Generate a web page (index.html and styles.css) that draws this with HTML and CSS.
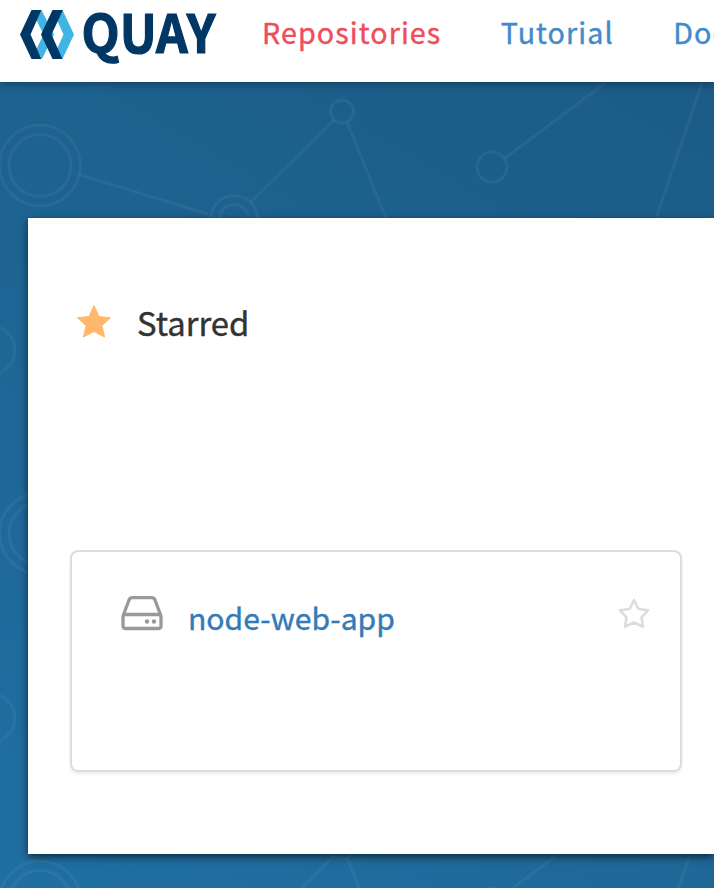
FILE: index.html
```html
<!DOCTYPE html>
<html lang="en">
<head>
<meta charset="utf-8">
<title>Quay</title>
<link rel="stylesheet" href="styles.css">
</head>
<body>
<svg class="network" viewBox="0 0 714 888" aria-hidden="true">
  <defs>
    <g id="tile">
      <circle cx="40" cy="165.500" r="40.500"/><circle cx="40" cy="165.500" r="31"/>
      <path d="M79 174.500L208 214M250 203L334 120M347 122L386 218M505 158L605 83M702 83L656 218"/>
      <circle cx="234" cy="219" r="23.500"/><circle cx="234" cy="219" r="14.500"/>
      <circle cx="342" cy="111.500" r="11.500"/><circle cx="492" cy="167" r="15"/>
    </g>
  </defs>
  <use href="#tile"/>
  <use href="#tile" y="736"/>
  <circle cx="-9" cy="350" r="24"/><circle cx="-9" cy="718" r="24"/>
  <circle cx="40" cy="533.500" r="40.500"/><circle cx="40" cy="533.500" r="31"/>
</svg>
<header class="navbar">
  <a class="brand">
    <svg class="logo" viewBox="0 0 200 60">
      <path class="light" d="M21.500 0L34 24.500L22 49L16.500 39L23.500 24.500L16.500 10Z"/>
      <path class="light" d="M42.500 0L54 24.500L42.500 49L37 39L43.500 24.500L37 10Z"/>
      <path class="dark" d="M11.500 0H21.500L10.500 24.500L21.500 49H11.500L0 24.500Z"/>
      <path class="dark" d="M32.500 0H43L31.500 24.500L42.500 49H32.500L21 24.500Z"/>
      <text class="wordmark" x="61.500" y="43" textLength="134" lengthAdjust="spacingAndGlyphs">QUAY</text>
    </svg>
  </a>
  <nav class="links">
    <a class="link active">Repositories</a>
    <a class="link">Tutorial</a>
    <a class="link">Docs</a>
  </nav>
</header>
<main class="panel">
  <h2 class="heading">
    <svg class="star" viewBox="0 0 34 33"><path d="M17 .5L22 11.500L33.500 12.800L25 20.500L27.500 32L17 26.500L6.500 32L9 20.500L.5 12.800L12 11.500Z"/></svg>
    <span>Starred</span>
  </h2>
  <section class="repo">
    <svg class="drive" viewBox="0 0 42 36">
      <path d="M2 20L8 4Q9 1.700 11.500 1.700H30.500Q33 1.700 34 4L40 20M4.500 18.500H37.500Q40 18.500 40 21V30Q40 32.500 37 32.500H5Q2 32.500 2 30V21Q2 18.500 4.500 18.500Z"/>
      <circle cx="26" cy="25.500" r="2.200"/><circle cx="33" cy="25.500" r="2.200"/>
    </svg>
    <a class="name">node-web-app</a>
    <svg class="star-outline" viewBox="0 0 32 31"><path d="M16 2L20.500 11L30 12.200L23.500 19.300L25 28.700L16 24.500L7 28.700L8.500 19.300L2 12.200L11.500 11Z"/></svg>
  </section>
</main>
</body>
</html>
```
FILE: styles.css
```css
* { box-sizing: border-box; }
html { overflow: hidden; }
body {
  margin: 0;
  height: 888px;
  overflow: hidden;
  position: relative;
  background: linear-gradient(30deg, #206fa2 0%, #1d6290 60%, #1b5a85 100%);
  font-family: "Noto Sans CJK SC", "Noto Sans", sans-serif;
}
.network {
  position: absolute;
  inset: 0;
  width: 714px;
  height: 888px;
  fill: none;
  stroke: rgba(255, 255, 255, 0.05);
  stroke-width: 3;
}
.navbar {
  position: relative;
  display: flex;
  height: 82px;
  padding-left: 20px;
  background: #fff;
  box-shadow: 0 2px 8px rgba(0, 0, 0, 0.35);
}
.brand { flex: none; width: 242px; padding-top: 10px; }
.logo { display: block; width: 200px; height: 60px; }
.dark, .wordmark { fill: #003764; }
.light { fill: #40b4e5; }
.wordmark {
  font-size: 53px;
  font-weight: 700;
  stroke: #003764;
  stroke-width: 1.2;
}
.links { display: flex; flex: 1; gap: 59.5px; min-width: 0; overflow: hidden; }
.link {
  flex: none;
  height: 63px;
  line-height: 63px;
  font-size: 28.7px;
  letter-spacing: 1.08px;
  color: #428bca;
  -webkit-text-stroke: 0.4px currentColor;
}
.link.active { color: #f04c5c; }
.panel {
  position: relative;
  height: 636px;
  margin: 136px 0 0 28px;
  padding: 78px 32px 0 42px;
  background: #fff;
  box-shadow: 0 3px 8px rgba(0, 0, 0, 0.6);
}
.heading {
  display: flex;
  align-items: center;
  gap: 26px;
  height: 50px;
  margin: 0 0 204px;
  padding-left: 7px;
  font-size: 32.8px;
  font-weight: 400;
  color: #333;
  -webkit-text-stroke: 0.4px currentColor;
}
.star { width: 34px; height: 33px; fill: #ffb86c; stroke: #ffb86c; stroke-linejoin: round; }
.repo {
  display: flex;
  width: 612px;
  height: 222px;
  padding: 44px 30px 0 49px;
  border: 2px solid #ddd;
  border-radius: 8px;
  box-shadow: 0 2px 3px rgba(0, 0, 0, 0.08);
}
.drive { width: 42px; height: 36px; fill: none; stroke: #999; stroke-width: 3.3; stroke-linejoin: round; }
.drive circle { fill: #999; stroke: none; }
.name {
  margin-left: 25px;
  font-size: 30.1px;
  line-height: 43px;
  color: #337ab7;
  -webkit-text-stroke: 0.4px currentColor;
}
.star-outline { width: 32px; height: 31px; margin: 2px 0 0 auto; fill: none; stroke: #ddd; stroke-width: 2.6; stroke-linejoin: round; }
```
